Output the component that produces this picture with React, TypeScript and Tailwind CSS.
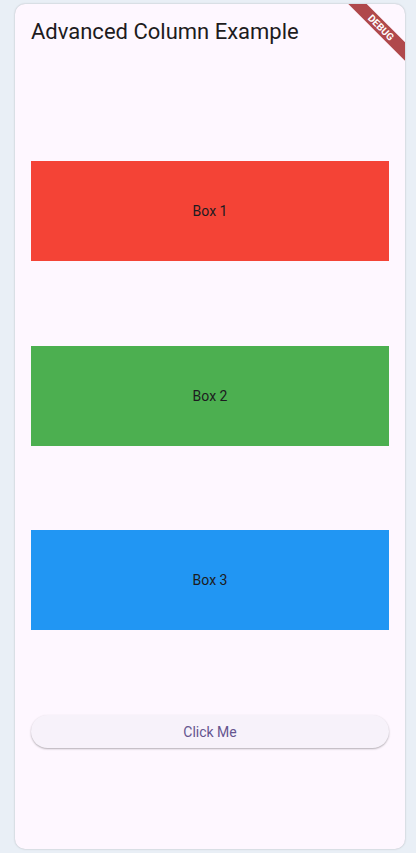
const boxes = [
  { label: "Box 1", color: "bg-[#f44336]" },
  { label: "Box 2", color: "bg-[#4caf50]" },
  { label: "Box 3", color: "bg-[#2196f3]" },
];

export default function App() {
  return (
    <div
      className="w-[416px] h-[853px] bg-[#e9eff6] pt-[4px] pl-[15px]"
      style={{ fontFamily: "Roboto, 'Noto Sans', sans-serif" }}
    >
      <div className="relative w-[390px] h-[845px] rounded-[10px] bg-[#fef7ff] shadow-[0_0_2px_rgba(0,0,0,0.25)] overflow-hidden flex flex-col">
        <div className="h-[56px] flex items-center px-4 shrink-0">
          <h1 className="text-[22px] text-[#1d1b20] leading-7">
            Advanced Column Example
          </h1>
        </div>

        <div className="flex-1 flex flex-col justify-evenly p-4">
          {boxes.map((box) => (
            <div
              key={box.label}
              className={`${box.color} h-[100px] flex items-center justify-center text-sm text-[#1d1b20]`}
            >
              {box.label}
            </div>
          ))}
          <button className="h-[33px] rounded-full bg-[#f7f2fa] text-[#65558f] text-sm shadow-[0_1px_2px_rgba(0,0,0,0.3)]">
            Click Me
          </button>
        </div>

        {/* debug banner */}
        <div className="absolute left-[314px] top-[17px] w-[104px] h-[13px] rotate-45 bg-[#b0484b] flex items-center justify-center">
          <span className="text-[10px] font-bold text-white leading-none">
            DEBUG
          </span>
        </div>
      </div>
    </div>
  );
}
